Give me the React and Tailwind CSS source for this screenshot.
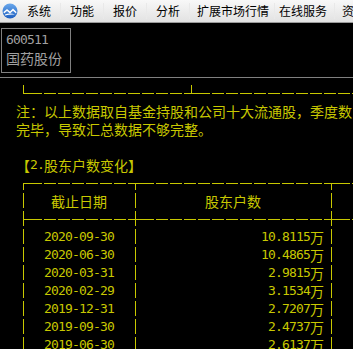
import React from "react";

const notes = [
  "└" + "─".repeat(11) + "┴" + "─".repeat(12),
  "注：以上数据取自基金持股和公司十大流通股，季度数",
  "完毕，导致汇总数据不够完整。",
  "",
  "【2.股东户数变化】",
];

const holders = [
  ["2020-09-30", "10.8115"],
  ["2020-06-30", "10.4865"],
  ["2020-03-31", "2.9815"],
  ["2020-02-29", "3.1534"],
  ["2019-12-31", "2.7207"],
  ["2019-09-30", "2.4737"],
  ["2019-06-30", "2.6137"],
];

const line = (l, m) => l + "─".repeat(7) + m + "─".repeat(13) + m + "─".repeat(3);

const tableRows = [
  line("┌", "┬"),
  "│   截止日期   │" + " ".repeat(9) + "股东户数" + " ".repeat(9) + "│",
  line("├", "┼"),
  ...holders.map(
    ([date, num]) => "│  " + date + "  │" + " ".repeat(24 - num.length) + num + "万│"
  ),
];

// which arms each box character has: up, down, left, right
const BOX = {
  "─": "lr",
  "│": "ud",
  "┌": "dr",
  "┬": "dlr",
  "├": "udr",
  "┼": "udlr",
  "└": "ur",
  "┴": "ulr",
};

const BoxChar = ({ arms }) => {
  const horiz = arms.includes("l") || arms.includes("r");
  const x1 = arms.includes("l") ? 0 : 7;
  const x2 = arms.includes("r") ? (arms === "lr" ? 12 : 14) : 8;
  const y1 = arms.includes("u") ? 1 : 9;
  const y2 = arms.includes("d") ? 16 : 10;
  return (
    <svg width="14" height="18" viewBox="0 0 14 18" className="flex-none">
      {horiz && <rect x={x1} y="9" width={x2 - x1} height="1" fill="#c8c800" />}
      {(arms.includes("u") || arms.includes("d")) && (
        <rect x="7" y={y1} width="1" height={y2 - y1} fill="#c8c800" />
      )}
    </svg>
  );
};

// split a row into runs of half-width (ascii) and full-width characters
const runs = (text) => {
  const out = [];
  for (const ch of text) {
    if (BOX[ch]) {
      out.push({ box: BOX[ch] });
      continue;
    }
    const wide = ch.charCodeAt(0) > 0x2000;
    const last = out[out.length - 1];
    if (last && !last.box && last.wide === wide) last.text += ch;
    else out.push({ wide, text: ch });
  }
  return out;
};

const Row = ({ text }) => (
  <div className="flex h-[18px] leading-[18px] whitespace-pre">
    {runs(text).map((r, i) =>
      r.box ? (
        <BoxChar key={i} arms={r.box} />
      ) : r.wide ? (
        <span key={i} className="flex-none font-['Noto_Sans_CJK_SC',sans-serif] text-[14px]">
          {r.text}
        </span>
      ) : (
        <span key={i} className="flex-none font-['DejaVu_Sans_Mono',monospace] text-[13px] tracking-[-0.827px]">
          {r.text}
        </span>
      )
    )}
  </div>
);

const Logo = () => (
  <svg width="16" height="16" viewBox="0 0 16 16">
    <defs>
      <linearGradient id="lg" x1="0" y1="0" x2="0" y2="1">
        <stop offset="0" stopColor="#6aa8ec" />
        <stop offset="1" stopColor="#1d5fc0" />
      </linearGradient>
    </defs>
    <circle cx="8" cy="8" r="7.5" fill="url(#lg)" />
    <path d="M1.5 9 L5 6 L8 8.5 L11 5.5 L14.5 9 L14 10.5 L11 7.8 L8 10.4 L5 8 L2 10.5 Z" fill="#fff" />
    <path d="M3 11.5 Q8 9.5 13 11.5 Q8 11 3 12.5 Z" fill="#fff" />
  </svg>
);

const Sep = () => <span className="h-[16px] w-px flex-none bg-[#e9e9e9]" />;

const Menu = () => (
  <div className="flex h-[23px] items-center border-b border-[#9a9a9a] bg-linear-to-b from-[#f8f8f8] to-[#e2e2e2] font-['Noto_Sans_CJK_SC',sans-serif] text-[12px] text-black whitespace-nowrap overflow-hidden">
    <span className="flex w-[27px] flex-none pl-[2px]"><Logo /></span>
    <span className="w-[33px] flex-none">系统</span>
    <Sep />
    <span className="ml-[9px] w-[33px] flex-none">功能</span>
    <Sep />
    <span className="ml-[9px] w-[33px] flex-none">报价</span>
    <Sep />
    <span className="ml-[9px] w-[33px] flex-none">分析</span>
    <Sep />
    <span className="ml-[7px] w-[77px] flex-none">扩展市场行情</span>
    <Sep />
    <span className="ml-[4px] w-[55px] flex-none">在线服务</span>
    <Sep />
    <span className="ml-[7px] flex-none">资讯</span>
  </div>
);

export default function App() {
  return (
    <div lang="zh-CN" className="flex h-[349px] w-[353px] flex-col overflow-hidden bg-black">
      <Menu />
      <div className="mt-[5px] ml-px flex h-[45px] w-[70px] flex-col border border-[#808080] pl-[4px] text-[#a0a0a0]">
        <span className="mt-[2px] h-[17px] leading-[17px] font-['DejaVu_Sans_Mono',monospace] text-[13px] tracking-[-0.827px]">
          600511
        </span>
        <span className="h-[20px] leading-[20px] font-['Noto_Sans_CJK_SC',sans-serif] text-[14px]">
          国药股份
        </span>
      </div>
      <div className="mt-[4px] h-px bg-[#808080]" />
      <div className="flex-1 overflow-hidden pt-[6px] pl-[16px] text-[#c8c800]">
        {notes.map((t, i) => (
          <Row key={"n" + i} text={t} />
        ))}
        {tableRows.map((t, i) => (
          <Row key={"t" + i} text={t} />
        ))}
      </div>
    </div>
  );
}
